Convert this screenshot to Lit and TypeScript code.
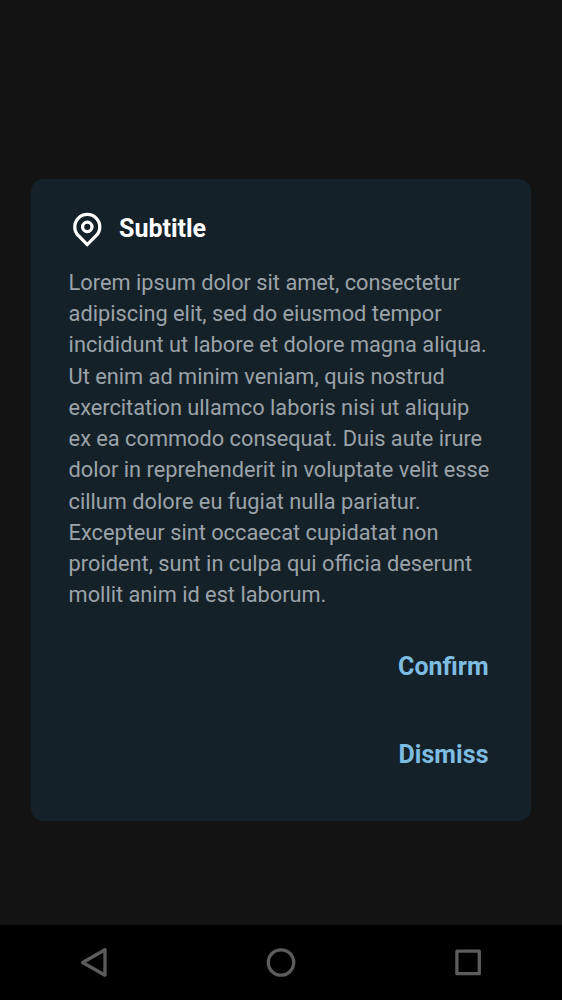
import { LitElement, html, css } from "lit";
import { customElement } from "lit/decorators.js";

const LINES = [
  "Lorem ipsum dolor sit amet, consectetur",
  "adipiscing elit, sed do eiusmod tempor",
  "incididunt ut labore et dolore magna aliqua.",
  "Ut enim ad minim veniam, quis nostrud",
  "exercitation ullamco laboris nisi ut aliquip",
  "ex ea commodo consequat. Duis aute irure",
  "dolor in reprehenderit in voluptate velit esse",
  "cillum dolore eu fugiat nulla pariatur.",
  "Excepteur sint occaecat cupidatat non",
  "proident, sunt in culpa qui officia deserunt",
  "mollit anim id est laborum.",
];

@customElement("app-root")
export class AppRoot extends LitElement {
  static styles = css`
    :host { display: flex; flex-direction: column; height: 1000px; background: #131313; font-family: Roboto, sans-serif; }
    * { box-sizing: border-box; }
    .stage { flex: 1; padding: 179px 31px 0; }
    .dialog { height: 642px; border-radius: 12.5px; background: #152128; padding: 30.6px 37.6px 0; display: flex; flex-direction: column; }
    .head { display: flex; align-items: center; height: 37.5px; gap: 12.9px; }
    .pin { display: block; width: 37.5px; height: 37.5px; }
    h2 { margin: 0; font-size: 25px; line-height: 37.5px; font-weight: 700; color: #fff; }
    .body { margin: 19.7px 0 0; font-size: 21.77px; line-height: 31.25px; color: #9ba3aa; white-space: nowrap; }
    .line { display: block; }
    .actions { display: flex; flex-direction: column; align-items: flex-end; padding-right: 4.8px; margin-top: 37px; gap: 50px; }
    button { border: 0; padding: 0; background: none; font: 700 25px/38px Roboto, sans-serif; color: #7dbde2; }
    .dismiss { letter-spacing: 0.08px; }
    nav { height: 75px; background: #000; display: grid; grid-template-columns: repeat(3, 1fr); justify-items: center; align-items: center; }
    nav svg { display: block; }
  `;

  render() {
    return html`
      <div class="stage">
        <section class="dialog" role="dialog">
          <div class="head">
            <svg class="pin" viewBox="0.3 0.2 24 24" fill="none" stroke="#fff" stroke-width="2.1">
              <path d="M12 22.31 L6.343 16.657 A8 8 0 1 1 17.657 16.657 Z" />
              <circle cx="12" cy="11" r="3" />
            </svg>
            <h2>Subtitle</h2>
          </div>
          <p class="body">${LINES.map((l) => html`<span class="line">${l}</span>`)}</p>
          <div class="actions"><button>Confirm</button><button class="dismiss">Dismiss</button></div>
        </section>
      </div>
      <nav>
        <svg width="40" height="40" viewBox="0 0 40 40" fill="none" stroke="#5c5c5c" stroke-width="3.3" stroke-linejoin="round"><path d="M8.7 19.5 L31 6.8 V32.2 Z" /></svg>
        <svg width="40" height="40" viewBox="0 0 40 40" fill="none" stroke="#5c5c5c" stroke-width="3.3"><circle cx="20" cy="19.5" r="12.7" /></svg>
        <svg width="40" height="40" viewBox="0 0 40 40" fill="none" stroke="#5c5c5c" stroke-width="3.3" stroke-linejoin="round"><path d="M8.9 8.2 H31.3 V30.7 H8.9 Z" /></svg>
      </nav>
    `;
  }
}
